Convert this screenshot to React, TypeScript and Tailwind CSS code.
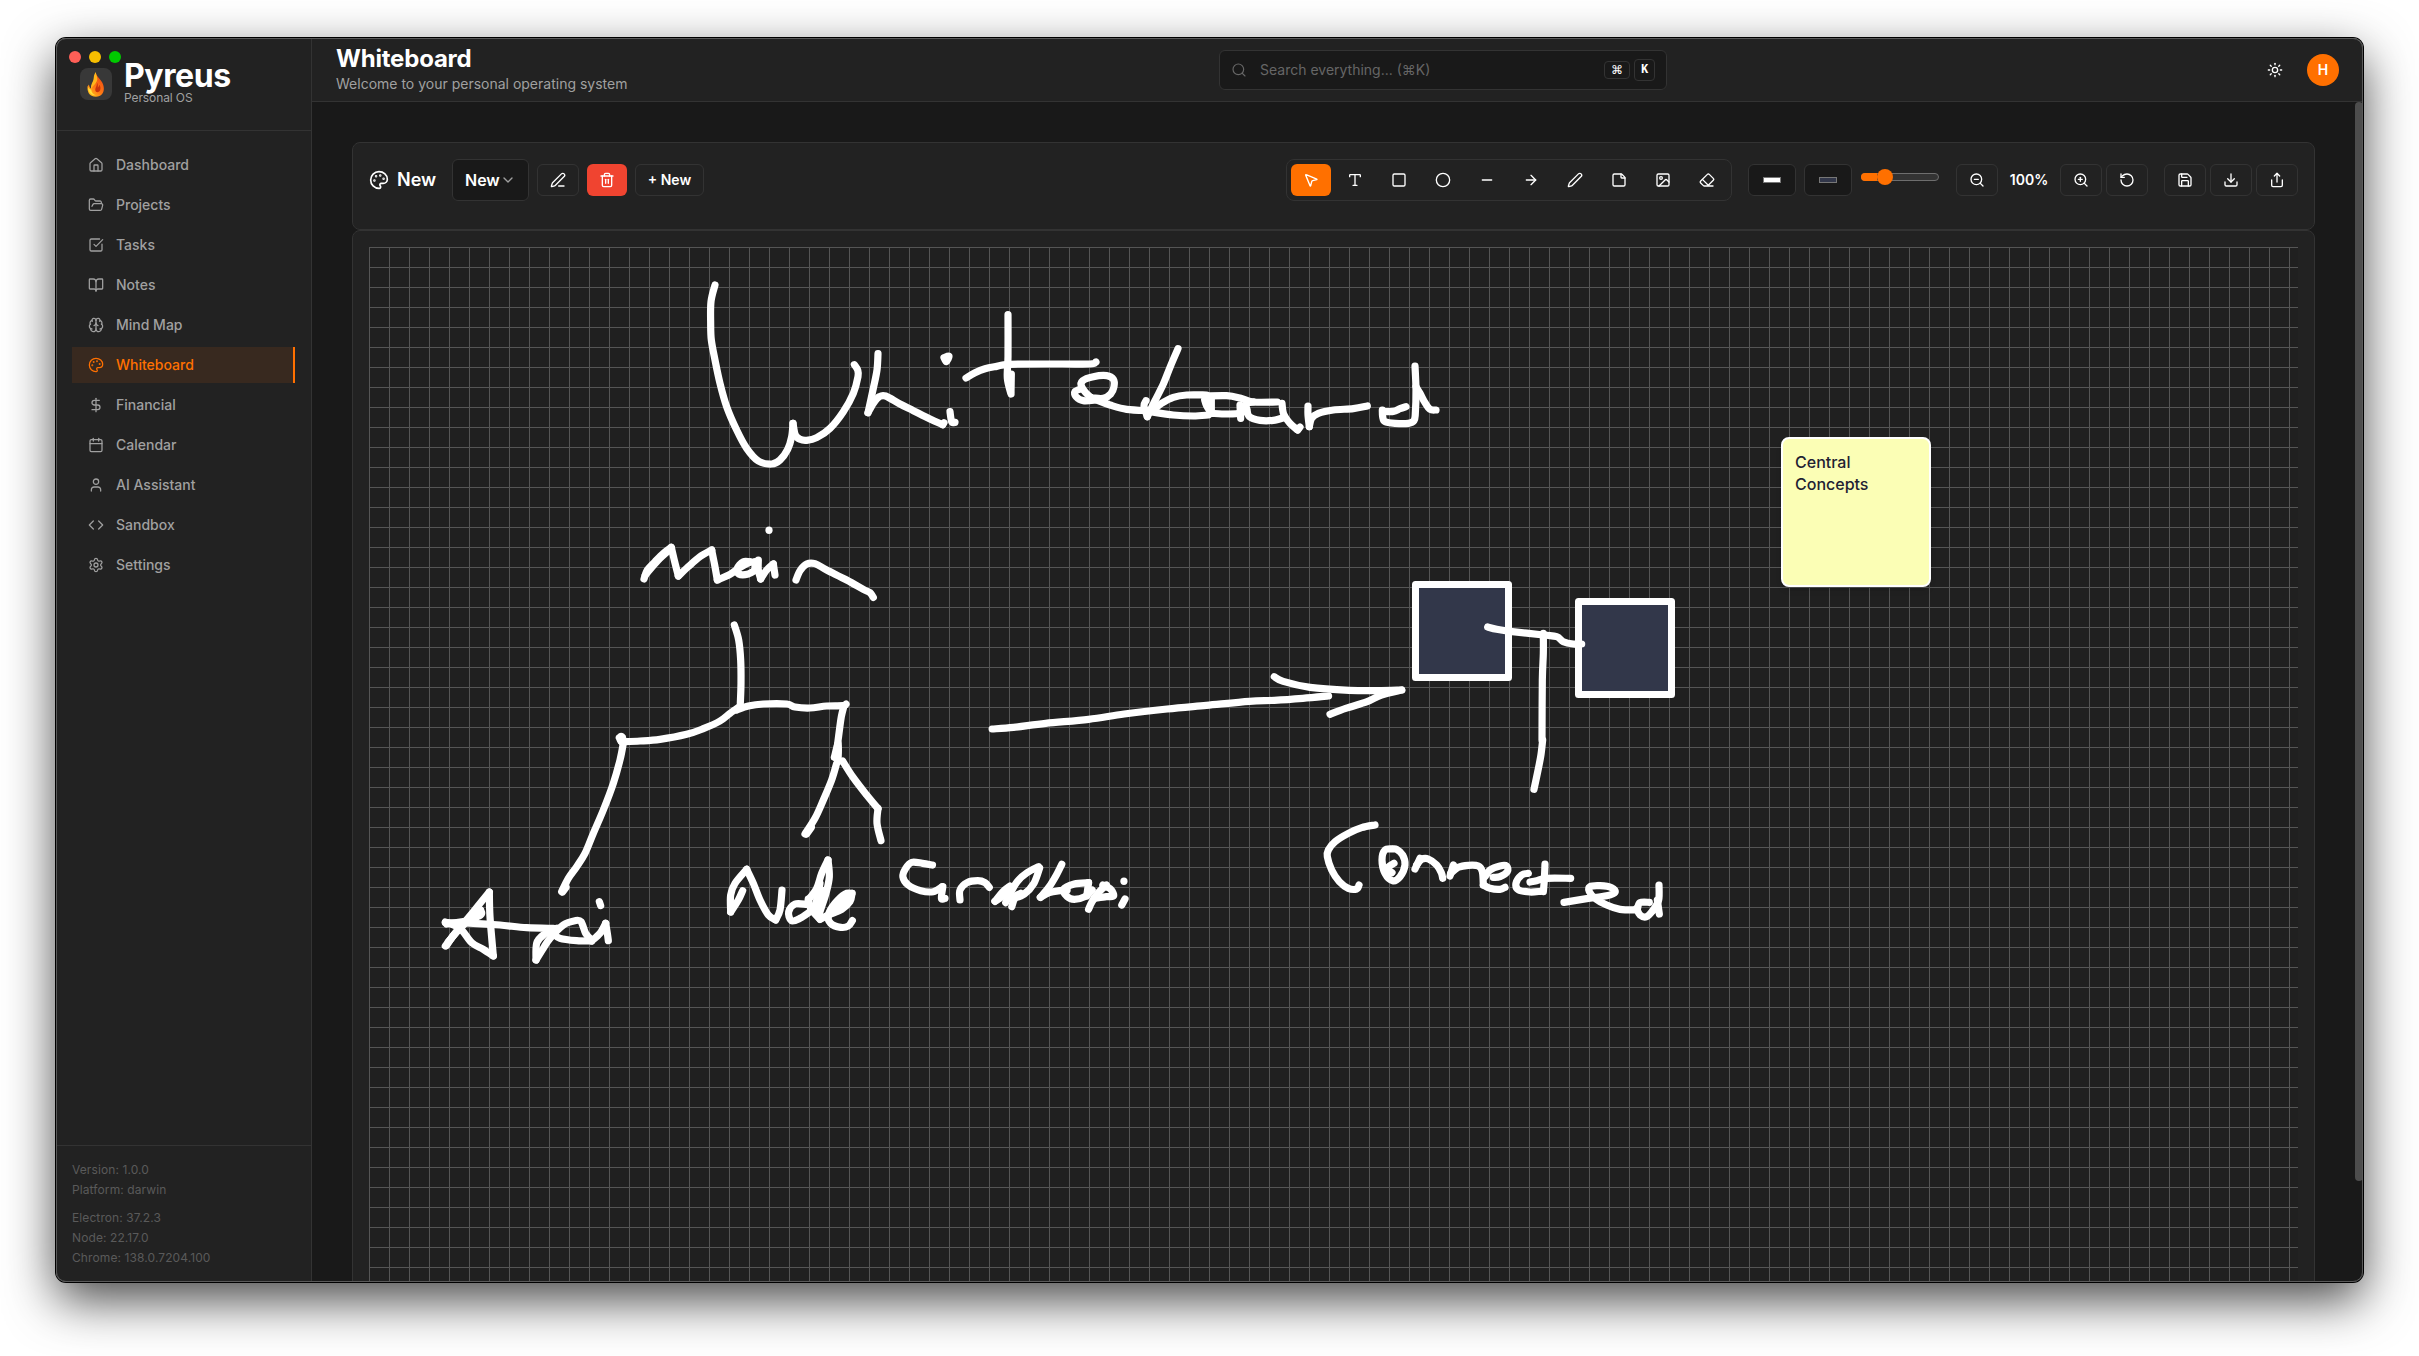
import React from "react";
import {
  ArrowRight, BookOpen, Brain, Calendar, ChevronDown, Circle, Code, DollarSign, Download, Eraser,
  FolderOpen, House, Image as ImageIcon, Minus, MousePointer2, Palette, Pen, PenLine, RotateCcw, Save,
  Search, Settings, Share, Square, SquareCheckBig, StickyNote, Sun, Trash2, Type, User, ZoomIn, ZoomOut,
} from "lucide-react";

const NAV = [
  { label: "Dashboard", icon: House },
  { label: "Projects", icon: FolderOpen },
  { label: "Tasks", icon: SquareCheckBig },
  { label: "Notes", icon: BookOpen },
  { label: "Mind Map", icon: Brain },
  { label: "Whiteboard", icon: Palette, active: true },
  { label: "Financial", icon: DollarSign },
  { label: "Calendar", icon: Calendar },
  { label: "AI Assistant", icon: User },
  { label: "Sandbox", icon: Code },
  { label: "Settings", icon: Settings },
];

const TOOLS = [MousePointer2, Type, Square, Circle, Minus, ArrowRight, Pen, StickyNote, ImageIcon, Eraser];

type Ink = { x: number; y: number; sx: number; strokes: string[] };

// Freehand ink, grouped by region; points are in thirds of a canvas unit.
const INK: Ink[] = [
  {
    x: 640, y: 260, sx: 1 / 3,
    strokes: [
      "225,75 213,125 212,190 214,240 225,300 240,370 260,440 290,510 320,565 355,603 395,612 420,600 443,568 455,530 459,490",
      "459,490 466,525 480,538 500,541 530,533 570,505 610,455 640,400 654,350 653,330 643,314",
      "714,281 711,330 700,385 684,458",
      "684,458 700,430 718,410 737,408 780,432 820,452 870,477 908,494",
      "908,494 912,488",
      "930,455 935,485 945,487",
      "912,293 927,288 919,305 912,293",
      "978,354 1005,338 1035,326 1070,319 1110,313 1260,312 1350,312 1368,306",
      "1104,164 1104,290 1102,355 1113,402",
      "1114,342 1113,395",
      "12,957 22,930 45,905 70,880 94,862",
      "16,945 55,900 94,865",
      "94,862 104,905 115,948",
      "115,948 145,920 180,890 215,870",
      "215,870 224,915 232,960",
      "232,960 270,943 300,922 330,906",
      "335,906 310,905 292,925 296,942 325,942 350,928",
      "355,900 355,930 362,957",
      "345,905 345,930",
      "362,957 380,930 400,912",
      "400,912 405,945",
      "387,810 387,811",
      "468,960 480,932 500,912 525,911 560,930 620,960 670,988 690,998 700,1012",
    ],
  },
  {
    x: 1040, y: 280, sx: 1 / 3,
    strokes: [
      "160,354 190,355 212,342 222,320 220,298 200,287 160,290 128,302 125,320 150,350 175,362 210,375 260,388 330,392",
      "125,326 105,335 108,350 130,362 170,360",
      "414,206 390,262 370,312 345,362 322,410",
      "318,362 312,378 322,410",
      "340,390 365,370 400,352 440,345 500,345",
      "330,395 400,405 460,408 505,405",
      "494,360 500,378 514,400",
      "514,350 514,400",
      "500,348 560,347 600,354 640,366 712,366",
      "514,400 560,402 600,400 620,388",
      "600,375 602,415",
      "612,390 622,370 640,366",
      "620,385 628,410 660,421 700,421 735,412",
      "726,370 731,402 750,430 773,450",
      "773,450 780,441",
      "804,378 804,405 808,440",
      "808,440 815,415 835,400 880,390 940,386 982,378",
      "1098,380 1080,386 1060,394 1028,395",
      "1027,390 1028,410 1035,425 1065,430 1105,430 1122,422 1126,400 1128,330 1125,258",
      "1128,320 1140,340 1155,368 1170,388 1188,390",
    ],
  },
  {
    x: 420, y: 600, sx: 1 / 3,
    strokes: [
      "943,75 956,120 962,180 963,250 961,310",
      "950,330 985,318 1030,312 1100,312 1125,321 1170,324 1220,318 1270,317 1278,312",
      "961,318 930,340 900,363 850,386 800,403 720,418 660,423 605,425",
      "598,413 603,409 608,413 603,424 598,413",
      "610,430 600,480 580,550 550,630 520,700 495,760 470,800 445,835 425,875",
      "438,862 428,876",
      "1272,317 1264,350 1257,400 1252,440 1250,475",
      "1243,472 1255,430 1254,485",
      "1250,490 1235,540 1210,600 1185,655 1155,702",
      "1174,682 1160,702",
      "1268,483 1300,533 1340,585 1374,626",
      "1374,626 1371,670 1383,722",
      "76,1038 110,995 160,935 208,876",
      "182,930 182,945 140,965 105,1000 80,1036",
      "85,1025 120,985 178,928",
      "80,972 130,965",
      "208,876 210,950 220,1068",
      "220,1068 190,1048 155,1028 120,985 76,966",
      "76,968 160,970 240,975 320,983 400,985",
      "410,985 370,1005 350,1030 348,1080",
      "348,1080 370,1045 390,1015 430,975 465,962 483,965 497,1000 515,1020",
      "400,1000 420,1015 470,1022 515,1023",
      "515,1023 540,1000 557,970",
      "557,970 562,1000 565,1022",
      "538,905 542,917",
      "968,872 955,900 932,936",
      "932,936 932,885 945,850 980,808",
      "980,808 1000,850 1020,900 1045,945 1067,960",
      "1067,960 1080,930 1086,870",
      "1160,913 1125,912 1106,935 1114,962 1140,955 1170,935",
      "1165,897 1172,925 1200,958",
      "1224,780 1205,820 1190,865 1165,900",
      "1224,780 1228,830 1218,880 1205,920 1195,950",
      "1200,850 1190,900 1180,930",
      "1205,870 1190,920",
      "1200,958 1225,945 1265,928 1290,905 1296,880",
      "1296,880 1275,882 1245,910 1225,945 1232,970 1262,982 1285,978 1297,962",
      "1240,932 1280,898",
    ],
  },
  {
    x: 860, y: 640, sx: 0.35714,
    strokes: [
      "203,675 175,670 145,667 128,685 120,710 135,735 170,752 205,755 230,740",
      "232,740 228,775 238,775",
      "280,780 280,750 300,728 330,722 350,728 362,742",
      "378,784 400,755 420,738",
      "378,784 400,768 422,745",
      "408,788 420,762 440,725 468,698 500,680",
      "425,800 435,770 450,760",
      "503,684 487,730 460,762 430,775",
      "565,673 550,705 530,740 505,772",
      "505,772 530,758 560,752 580,750",
      "640,728 600,732 570,748 580,770 600,778 630,770 650,750",
      "640,728 635,768",
      "640,808 650,785 670,755 690,735",
      "680,735 702,748 710,768 690,770 655,775",
      "739,723 739,724",
      "742,777 733,795",
      "370,267 430,262 520,250 640,238 740,222 860,207 970,196 1090,184 1160,181 1240,175 1312,168",
      "1160,110 1185,124 1260,142 1370,151 1450,152 1517,150",
      "1517,150 1460,165 1420,185 1360,205 1316,223",
    ],
  },
  {
    x: 1300, y: 560, sx: 1 / 3,
    strokes: [
      "225,795 185,803 145,820 105,845 85,870 82,890 95,930 118,965 145,985 170,987 177,975",
      "280,867 255,870 246,900 255,940 278,962 300,950 315,915 308,885 290,868 275,867",
      "282,910 264,922 268,932 276,938",
      "345,927 360,895",
      "350,915 365,898 385,897 410,915 424,938 428,955",
      "450,948 460,915",
      "452,940 475,922 505,916 535,918 547,935 550,975",
      "550,975 570,985 600,988 615,982",
      "580,952 600,950 622,935 620,918 600,918 570,930 555,950",
      "685,940 665,945 648,970 656,990 690,996 722,994",
      "690,966 710,962 740,955 812,955",
      "735,912 733,960 730,995",
      "792,1027 860,1016 920,1007 945,997 935,983 900,977 870,980 868,995 885,1015 920,1035 960,1048 1010,1050",
      "1010,1045 1020,1065 1040,1070 1060,1050",
      "1048,1027 1020,1028 1012,1048",
      "1077,975 1076,1020 1060,1050",
      "1072,1020 1078,1062",
      "563,201 590,208 630,214 730,225 770,230 790,245 820,252 845,252",
      "730,220 730,280 727,360 726,540",
      "728,540 722,590 710,650 702,688",
    ],
  },
];

// Catmull-Rom spline through the sampled points.
function spline(ink: Ink, points: string) {
  const p = points.split(" ").map((s) => {
    const [a, b] = s.split(",").map(Number);
    return [ink.x + a * ink.sx, ink.y + b / 3];
  });
  const f = (n: number) => n.toFixed(2);
  let d = `M${f(p[0][0])} ${f(p[0][1])}`;
  for (let i = 0; i < p.length - 1; i++) {
    const a = p[i - 1] ?? p[i];
    const b = p[i];
    const c = p[i + 1];
    const e = p[i + 2] ?? c;
    d += `C${f(b[0] + (c[0] - a[0]) / 6)} ${f(b[1] + (c[1] - a[1]) / 6)} ${f(c[0] - (e[0] - b[0]) / 6)} ${f(c[1] - (e[1] - b[1]) / 6)} ${f(c[0])} ${f(c[1])}`;
  }
  return d;
}

function Flame() {
  return (
    <svg width="18" height="25" viewBox="0 0 18 25">
      <defs>
        <linearGradient id="flame" x1="0" y1="1" x2="0.6" y2="0">
          <stop offset="0" stopColor="#ffd21f" />
          <stop offset="0.45" stopColor="#ff7a14" />
          <stop offset="1" stopColor="#f04a12" />
        </linearGradient>
      </defs>
      <path d="M8.6 0C9 4 13 6.500 15.200 10.500C18.500 16.500 17 24.500 9 24.700C3 24.800 0 20.500 0.500 14.500L2 12.500C2.200 14.500 2.800 15.700 4 16.500C3.800 11.500 9.500 8 8.600 0Z" fill="url(#flame)" />
      <path d="M8.800 0C5.800 4 7.600 6 5.800 9.500C4.600 12 3.500 14 4.200 17.500C5 14 9.500 12 10.300 7.500C10.500 4.500 9 3 8.800 0Z" fill="#ffb61c" />
      <path d="M9.500 10C11 13 8 15.500 8.300 18.300C8.600 20.500 11.500 21 13 18.500C14 16.500 13.500 14.500 12.300 12.800C12 14.500 11.300 15.300 10.700 15.500C11.300 13.500 10.800 11.500 9.500 10Z" fill="#c9340c" />
      <path d="M1 15C1 20 4 23.500 9 23.300C6 22.500 4.500 20.500 4.200 17.500C2.500 17.500 1.700 16.500 1 15Z" fill="#ffe03a" />
    </svg>
  );
}

function Sidebar() {
  return (
    <aside className="flex w-64 shrink-0 flex-col border-r border-[#333333]">
      <div className="relative h-[93px] border-b border-[#333333]">
        <div className="absolute left-[13px] top-[13px] flex gap-2">
          <span className="size-3 rounded-full bg-[#ff5f57]" />
          <span className="size-3 rounded-full bg-[#f6be00]" />
          <span className="size-3 rounded-full bg-[#00ca00]" />
        </div>
        <div className="flex items-start gap-3 pl-6 pt-[18px]">
          <div className="mt-3 flex size-8 items-center justify-center rounded-lg bg-[#383838]">
            <Flame />
          </div>
          <div>
            <div className="text-[32px] font-bold leading-[34px] tracking-[-0.4px] text-white pt-[3px]">Pyreus</div>
            <div className="-mt-[3px] text-xs leading-4 tracking-[-0.1px] text-[#a0a0a0]">Personal OS</div>
          </div>
        </div>
      </div>
      <nav className="flex flex-1 flex-col gap-1 p-4">
        {NAV.map(({ label, icon: Icon, active }) => (
          <div
            key={label}
            className={
              active
                ? "flex h-9 items-center gap-3 border-r-2 border-[#ff7000] bg-[#38291f] px-4 text-sm font-medium text-[#ff7000]"
                : "flex h-9 items-center gap-3 px-4 text-sm font-medium text-[#a0a0a0]"
            }
          >
            <Icon size={16} strokeWidth={1.9} />
            {label}
          </div>
        ))}
      </nav>
      <div className="border-t border-[#333333] px-4 pb-[14px] pt-[14px] text-xs leading-5 tracking-[0.1px] text-[#5a5a5a]">
        <div>Version: 1.0.0</div>
        <div>Platform: darwin</div>
        <div className="mt-2">Electron: 37.2.3</div>
        <div>Node: 22.17.0</div>
        <div>Chrome: 138.0.7204.100</div>
      </div>
    </aside>
  );
}

function Header() {
  return (
    <header className="flex h-16 shrink-0 items-center justify-between border-b border-[#333333] pl-6 pr-6">
      <div className="-mt-px w-[883px]">
        <div className="text-2xl font-bold leading-[30px] tracking-[-0.2px] text-white">Whiteboard</div>
        <div className="text-sm leading-5 text-[#a0a0a0]">Welcome to your personal operating system</div>
      </div>
      <div className="flex h-10 w-[448px] items-center rounded-md border border-[#333333] bg-[#191919] px-[11px]">
        <Search size={16} strokeWidth={1.75} className="text-[#666666]" />
        <span className="ml-[13px] flex-1 text-sm text-[#666666]">Search everything... (⌘K)</span>
        <kbd className="flex h-[18px] w-[26px] items-center justify-center rounded border border-[#333333] bg-[#191919] font-sans text-xs text-white">⌘</kbd>
        <kbd className="ml-1 flex h-[22px] w-[21px] items-center justify-center rounded border border-[#333333] bg-[#191919] font-['Liberation_Mono'] text-xs font-bold text-white">K</kbd>
      </div>
      <div className="flex w-[672px] items-center justify-end gap-6">
        <Sun size={16} strokeWidth={2} className="text-white" />
        <div className="flex size-8 items-center justify-center rounded-full bg-[#ff7000] text-sm font-semibold text-white">H</div>
      </div>
    </header>
  );
}

function IconButton({ children }: { children: React.ReactNode }) {
  return <div className="flex h-8 w-[42px] items-center justify-center rounded-md border border-[#333333]">{children}</div>;
}

function Toolbar() {
  return (
    <div className="flex h-[88px] items-start justify-between rounded-lg border border-[#333333] bg-[#222222] p-4 text-white">
      <div className="flex h-[42px] items-center">
        <Palette size={20} strokeWidth={2} />
        <span className="ml-2 w-[55px] text-lg font-semibold">New</span>
        <div className="flex h-[42px] w-[77px] items-center justify-between rounded-md border border-[#333333] bg-[#191919] px-3 font-semibold">
          New
          <ChevronDown size={16} strokeWidth={2} className="shrink-0 text-[#a0a0a0]" />
        </div>
        <div className="ml-2 flex h-8 w-[42px] items-center justify-center rounded-md border border-[#333333]">
          <PenLine size={16} strokeWidth={2} />
        </div>
        <div className="ml-2 flex h-8 w-10 items-center justify-center rounded-md bg-[#f04430]">
          <Trash2 size={16} strokeWidth={2} />
        </div>
        <div className="ml-2 flex h-8 w-[69px] items-center justify-center rounded-md border border-[#333333] text-sm font-semibold">
          + New
        </div>
      </div>
      <div className="flex h-[42px] items-center gap-4">
        <div className="flex gap-1 rounded-lg border border-[#333333] p-1">
          {TOOLS.map((Icon, i) => (
            <div
              key={i}
              className={
                i === 0
                  ? "flex h-8 w-10 items-center justify-center rounded-md bg-[#ff7000]"
                  : "flex h-8 w-10 items-center justify-center rounded-md"
              }
            >
              <Icon size={16} strokeWidth={2} />
            </div>
          ))}
        </div>
        <div className="flex items-center gap-2">
          <div className="flex h-8 w-12 items-center justify-center rounded-md border border-[#333333] bg-[#191919]">
            <div className="h-[6px] w-[18px] border border-[#777777] bg-white" />
          </div>
          <div className="flex h-8 w-12 items-center justify-center rounded-md border border-[#333333] bg-[#191919]">
            <div className="h-[6px] w-[18px] border border-[#777777] bg-[#32374a]" />
          </div>
          <div className="mx-px -mt-[6px] flex h-2 w-[78px] items-center rounded-full border border-[#6e6e6e] bg-[#333333]">
            <div className="-ml-px h-2 w-4 rounded-l-full bg-[#ff7000]" />
            <div className="size-4 shrink-0 rounded-full bg-[#ff7000]" />
          </div>
        </div>
        <div className="flex items-center gap-1">
          <IconButton><ZoomOut size={16} strokeWidth={2} /></IconButton>
          <span className="w-[54px] text-center text-sm font-semibold">100%</span>
          <IconButton><ZoomIn size={16} strokeWidth={2} /></IconButton>
          <IconButton><RotateCcw size={16} strokeWidth={2} /></IconButton>
        </div>
        <div className="flex items-center gap-1">
          <IconButton><Save size={16} strokeWidth={2} /></IconButton>
          <IconButton><Download size={16} strokeWidth={2} /></IconButton>
          <IconButton><Share size={16} strokeWidth={2} /></IconButton>
        </div>
      </div>
    </div>
  );
}

function Board() {
  return (
    <div className="h-[1100px] rounded-lg border border-[#333333] bg-[#222222] p-4">
      <div className="relative h-full w-full bg-[#202020] bg-[linear-gradient(to_right,#555555_1px,transparent_1px),linear-gradient(to_bottom,#555555_1px,transparent_1px)] bg-[size:20px_20px]">
        <svg className="absolute left-0 top-0" width="1929" height="1035" viewBox="369 247 1929 1035" fill="none">
          <rect x="1415.500" y="584.500" width="93" height="93" fill="#32374a" stroke="#fff" strokeWidth="7" strokeLinejoin="round" />
          <rect x="1578.500" y="601.500" width="93" height="93" fill="#32374a" stroke="#fff" strokeWidth="7" strokeLinejoin="round" />
          {INK.map((ink, i) => (
            <g key={i} stroke="#fff" strokeWidth="7.2" strokeLinecap="round" strokeLinejoin="round">
              {ink.strokes.map((s, j) => (
                <path key={j} d={spline(ink, s)} />
              ))}
            </g>
          ))}
        </svg>
        <div className="absolute left-[1412px] top-[190px] size-[150px] rounded-lg border-2 border-white bg-[#fbfeb5] p-3 pt-3 text-base font-medium leading-[22px] text-[#1f2233] shadow-md">
          Central
          <br />
          Concepts
        </div>
      </div>
    </div>
  );
}

export default function App() {
  return (
    <div className="flex h-[1356px] w-[2419px] items-start overflow-hidden bg-white pl-14 pt-[38px] font-['Inter',sans-serif]">
      <div className="relative h-[1244px] w-[2307px] rounded-[10px] shadow-[0_0_0_1px_#000,0_18px_50px_rgba(0,0,0,0.72)]">
        <div className="flex h-full w-full overflow-hidden rounded-[10px] bg-[#222222]">
          <Sidebar />
          <div className="flex min-w-0 flex-1 flex-col">
            <Header />
            <div className="flex min-h-0 flex-1 bg-[#191919]">
              <main className="min-w-0 flex-1 overflow-hidden p-10">
                <Toolbar />
                <Board />
              </main>
              <div className="w-2">
                <div className="h-[1079px] rounded bg-[#4d4d4d]" />
              </div>
            </div>
          </div>
        </div>
        <div className="pointer-events-none absolute inset-0 rounded-[10px] border border-[#5a5a5a]" />
      </div>
    </div>
  );
}
